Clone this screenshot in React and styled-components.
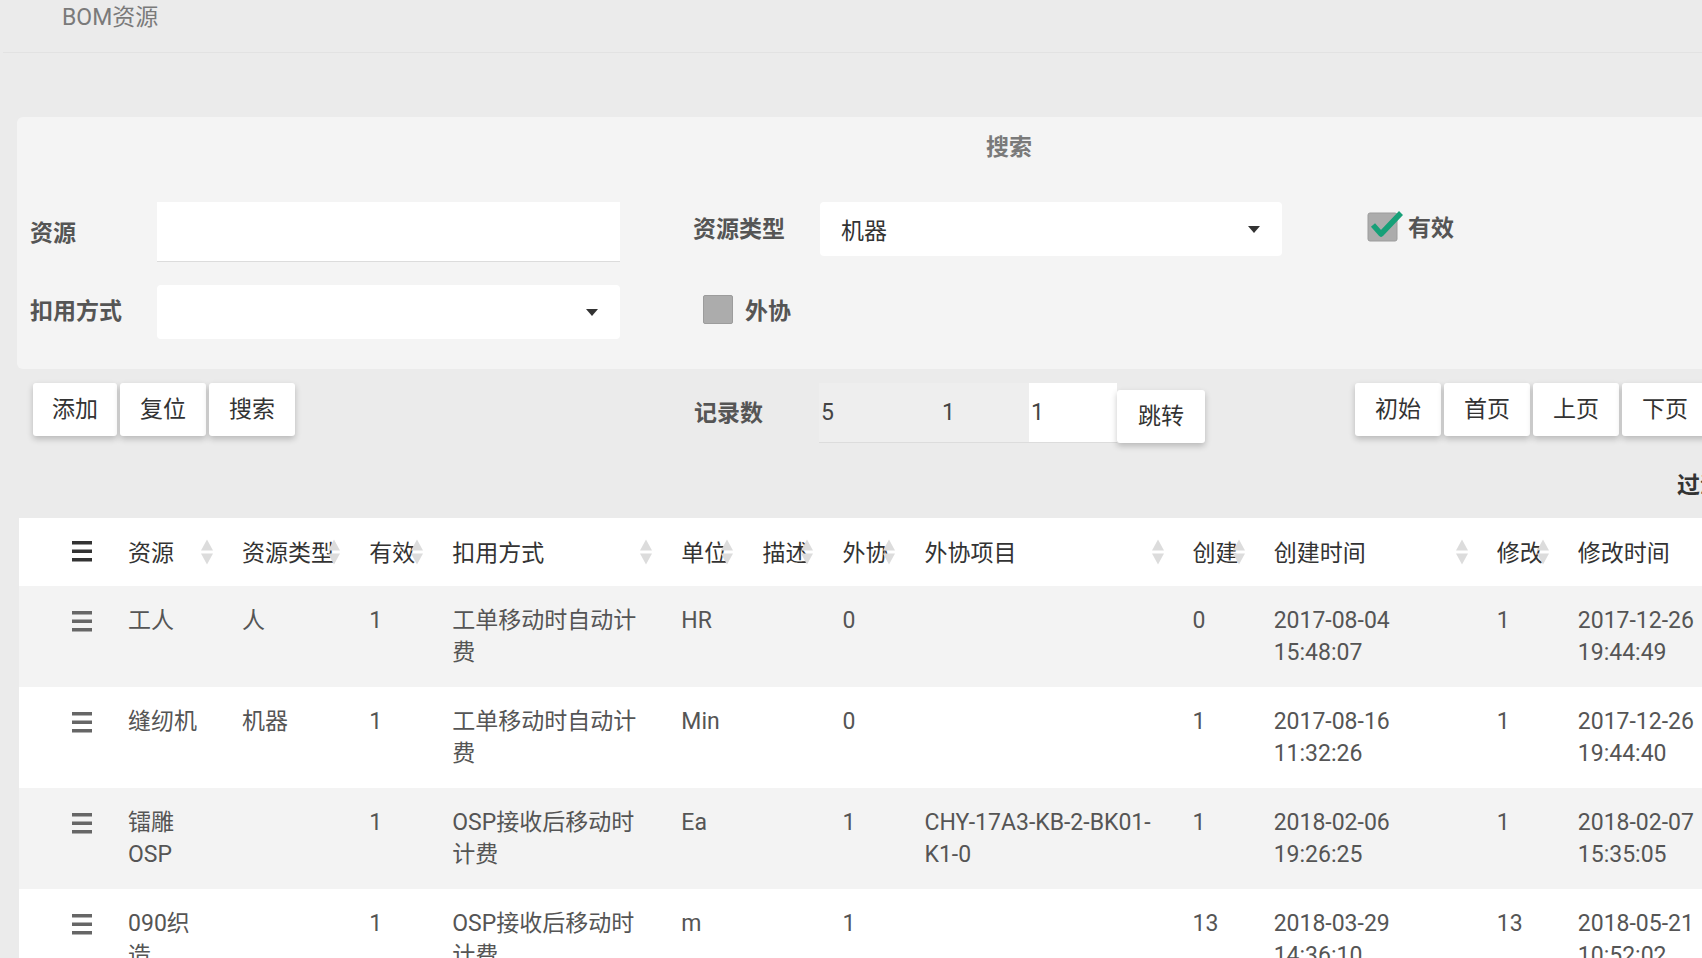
import styled, { createGlobalStyle } from 'styled-components';

const GlobalStyle = createGlobalStyle`
  html, body {
    margin: 0;
    padding: 0;
    overflow: hidden;
    background: #ebebeb;
  }
  * {
    box-sizing: border-box;
  }
`;

const FONT = `'Roboto', 'Noto Sans CJK SC', sans-serif`;

const Viewport = styled.div`
  width: 100vw;
  height: 100vh;
  overflow: hidden;
  background: #ebebeb;
  font-family: ${FONT};
  font-size: 23px;
`;

const Page = styled.div`
  width: 2020px;
  display: flex;
  flex-direction: column;
`;

// 页头
const Header = styled.div`
  height: 53px;
  padding: 3px 0 0 62px;
  border-bottom: 1px solid #e2e2e2;
  margin-left: 3px;
`;

const PageTitle = styled.div`
  font-size: 23px;
  line-height: 30px;
  color: #7a7a7a;
  margin-left: -3px;
`;

// 搜索面板
const SearchPanel = styled.div`
  margin: 64px 0 0 17px;
  width: 1984px;
  height: 252px;
  background: #f4f4f4;
  border-radius: 6px;
  padding: 16px 0 0 13px;
`;

const PanelTitle = styled.div`
  text-align: center;
  font-weight: 700;
  line-height: 30px;
  color: #7a7a7a;
  margin-bottom: 39px;
  padding-right: 13px;
`;

const FormGrid = styled.div`
  display: grid;
  grid-template-columns: 127px 463px 73px 127px 462px 85px auto;
  grid-template-rows: 60px 54px;
  row-gap: 23px;
  align-items: center;
`;

const Label = styled.div`
  font-weight: 700;
  color: #555;
  line-height: 30px;
  margin-top: ${p => p.$dy || 0}px;
`;

const TextInput = styled.div`
  height: 60px;
  background: #fff;
  border-bottom: 1px solid #dcdcdc;
`;

const Select = styled.div`
  height: ${p => p.$h}px;
  align-self: ${p => p.$align || 'center'};
  background: #fff;
  border-radius: 4px;
  display: flex;
  align-items: center;
  justify-content: space-between;
  padding: 0 22px 0 21px;
  color: #333;
`;

const Caret = styled.span`
  width: 0;
  height: 0;
  border-left: 6px solid transparent;
  border-right: 6px solid transparent;
  border-top: 7px solid #333;
`;

const CheckLabel = styled.label`
  display: flex;
  align-items: center;
  gap: ${p => p.$gap}px;
  font-weight: 700;
  color: #555;
  margin-left: ${p => p.$ml || 0}px;
  margin-top: ${p => p.$dy || 0}px;
`;

const EmptyBox = styled.span`
  width: 30px;
  height: 29px;
  background: #acacac;
  border: 1px solid #9c9c9c;
  border-radius: 2px;
`;

// 工具栏
const Toolbar = styled.div`
  display: flex;
  align-items: flex-start;
  margin-top: 14px;
  padding-left: 33px;
  height: 60px;
`;

const ButtonGroup = styled.div`
  display: flex;
  gap: 3px;
  margin-left: ${p => p.$ml || 0}px;
`;

const Button = styled.button`
  height: 53px;
  padding: 0 ${p => p.$px || 20}px;
  background: #fff;
  border: none;
  border-radius: 3px;
  box-shadow: 0 3px 6px rgba(0, 0, 0, 0.22);
  font-family: ${FONT};
  font-size: 23px;
  line-height: 30px;
  color: #333;
  cursor: pointer;
  outline: none;
`;

const RecordLabel = styled.div`
  margin: 16px 0 0 399px;
  font-weight: 700;
  color: #555;
  line-height: 30px;
`;

const PagerFields = styled.div`
  display: flex;
  align-items: flex-end;
  margin-left: 56px;
`;

const InfoField = styled.div`
  width: ${p => p.$w}px;
  height: 60px;
  background: ${p => (p.$white ? '#fff' : '#eeeeee')};
  border-bottom: 1px solid #dcdcdc;
  padding-left: ${p => p.$pl}px;
  display: flex;
  align-items: center;
  color: #444;
`;

const FilterRow = styled.div`
  height: 75px;
  padding: 28px 0 0 1677px;
  font-weight: 700;
  color: #333;
  line-height: 30px;
`;

// 表格
const Table = styled.table`
  margin-left: 19px;
  border-collapse: collapse;
  table-layout: fixed;
  width: 1749px;
`;

const Th = styled.th`
  position: relative;
  height: 68px;
  padding: 0 26px 3px ${p => p.$pl || 10}px;
  background: #fff;
  text-align: left;
  font-weight: 400;
  color: #333;
  white-space: nowrap;
  vertical-align: middle;
`;

const Row = styled.tr`
  background: ${p => (p.$odd ? '#f3f3f3' : '#fff')};
`;

const Td = styled.td`
  padding: 19px 26px 18px ${p => p.$pl || 10}px;
  line-height: 32px;
  color: #555;
  vertical-align: top;
  word-break: break-word;
`;

const SortIcon = styled.span`
  position: absolute;
  right: 19px;
  top: 50%;
  transform: translateY(-50%);
  display: flex;
  flex-direction: column;
  gap: 3px;
  &::before,
  &::after {
    content: '';
    width: 0;
    height: 0;
    border-left: 6px solid transparent;
    border-right: 6px solid transparent;
  }
  &::before {
    border-bottom: 11px solid #dcdcdc;
  }
  &::after {
    border-top: 11px solid #dcdcdc;
  }
`;

const MenuIcon = ({ color, top }) => (
  <svg width="20" height="21" viewBox="0 0 20 21" style={{ display: 'block', marginTop: top }}>
    <rect x="0" y="0" width="20" height="3.5" fill={color} />
    <rect x="0" y="8.5" width="20" height="3.5" fill={color} />
    <rect x="0" y="17" width="20" height="3.5" fill={color} />
  </svg>
);

const CheckedBox = () => (
  <svg width="38" height="32" viewBox="0 0 38 32">
    <rect x="1" y="3" width="29" height="28" rx="2" fill="#acacac" stroke="#9c9c9c" />
    <path d="M6 15 L14 24 L34 3" fill="none" stroke="#17a078" strokeWidth="5.5" strokeLinejoin="round" />
  </svg>
);

const WIDTHS = [99, 114, 127, 83, 229, 81, 80, 82, 268, 81, 223, 81, 200];

const HEADS = ['资源', '资源类型', '有效', '扣用方式', '单位', '描述', '外协', '外协项目', '创建', '创建时间', '修改', '修改时间'];

const ROWS = [
  ['工人', '人', '1', '工单移动时自动计费', 'HR', '', '0', '', '0', '2017-08-04 15:48:07', '1', '2017-12-26 19:44:49'],
  ['缝纫机', '机器', '1', '工单移动时自动计费', 'Min', '', '0', '', '1', '2017-08-16 11:32:26', '1', '2017-12-26 19:44:40'],
  ['镭雕OSP', '', '1', 'OSP接收后移动时计费', 'Ea', '', '1', 'CHY-17A3-KB-2-BK01-K1-0', '1', '2018-02-06 19:26:25', '1', '2018-02-07 15:35:05'],
  ['090织造', '', '1', 'OSP接收后移动时计费', 'm', '', '1', '', '13', '2018-03-29 14:36:10', '13', '2018-05-21 10:52:02'],
];

export default function App() {
  return (
    <Viewport>
      <GlobalStyle />
      <Page>
        <Header>
          <PageTitle>BOM资源</PageTitle>
        </Header>

        <SearchPanel>
          <PanelTitle>搜索</PanelTitle>
          <FormGrid>
            <Label $dy={4}>资源</Label>
            <TextInput />
            <div />
            <Label $dy={-5}>资源类型</Label>
            <Select $h={54} $align="start">
              <span>机器</span>
              <Caret />
            </Select>
            <div />
            <CheckLabel $gap={3} $dy={-12}>
              <CheckedBox />
              <span>有效</span>
            </CheckLabel>

            <Label>扣用方式</Label>
            <Select $h={54}>
              <span />
              <Caret />
            </Select>
            <div />
            <CheckLabel $gap={12} $ml={10} $dy={-6}>
              <EmptyBox />
              <span>外协</span>
            </CheckLabel>
          </FormGrid>
        </SearchPanel>

        <Toolbar>
          <ButtonGroup>
            <Button $px={19}>添加</Button>
            <Button>复位</Button>
            <Button>搜索</Button>
          </ButtonGroup>
          <RecordLabel>记录数</RecordLabel>
          <PagerFields>
            <InfoField $w={110} $pl={2}>5</InfoField>
            <InfoField $w={100} $pl={13}>1</InfoField>
            <InfoField $w={88} $pl={2} $white>1</InfoField>
            <Button $px={21}>跳转</Button>
          </PagerFields>
          <ButtonGroup $ml={150}>
            <Button>初始</Button>
            <Button>首页</Button>
            <Button>上页</Button>
            <Button>下页</Button>
          </ButtonGroup>
        </Toolbar>

        <FilterRow>过滤</FilterRow>

        <Table>
          <colgroup>
            {WIDTHS.map((w, i) => (
              <col key={i} style={{ width: w }} />
            ))}
          </colgroup>
          <thead>
            <tr>
              <Th $pl={53}>
                <MenuIcon color="#333" top={2} />
              </Th>
              {HEADS.map(h => (
                <Th key={h}>
                  {h}
                  <SortIcon />
                </Th>
              ))}
            </tr>
          </thead>
          <tbody>
            {ROWS.map((r, i) => (
              <Row key={i} $odd={i % 2 === 0}>
                <Td $pl={53}>
                  <MenuIcon color="#666" top={6} />
                </Td>
                {r.map((c, j) => (
                  <Td key={j}>{c}</Td>
                ))}
              </Row>
            ))}
          </tbody>
        </Table>
      </Page>
    </Viewport>
  );
}
